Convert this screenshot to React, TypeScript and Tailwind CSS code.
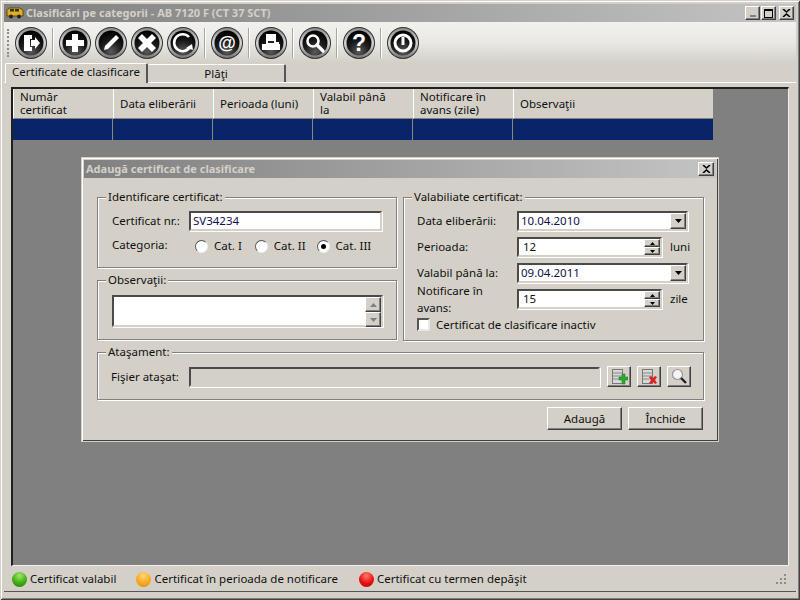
import type { ReactNode } from 'react'

const columns = ['Număr|certificat', 'Data eliberării', 'Perioada (luni)', 'Valabil până|la', 'Notificare în|avans (zile)', 'Observaţii']

// Round black toolbar button, the glyph goes on top of the ring
function RoundIcon({ children }: { children: ReactNode }) {
  return (
    <svg width="34" height="34" viewBox="0 0 34 34" className="shrink-0">
      <defs>
        <linearGradient id="ring" x1="0" y1="0" x2="0" y2="1">
          <stop offset="0" stopColor="#8a8a8a" />
          <stop offset="0.5" stopColor="#d8d8d8" />
          <stop offset="1" stopColor="#777777" />
        </linearGradient>
        <radialGradient id="ball" cx="0.5" cy="0.85" r="0.8">
          <stop offset="0" stopColor="#5a5a5a" />
          <stop offset="0.55" stopColor="#1a1a1a" />
          <stop offset="1" stopColor="#000000" />
        </radialGradient>
      </defs>
      <circle cx="17" cy="17" r="16" fill="#303030" />
      <circle cx="17" cy="17" r="15" fill="url(#ring)" />
      <circle cx="17" cy="17" r="12.5" fill="url(#ball)" />
      {children}
    </svg>
  )
}

function Separator() {
  return <div className="mx-[4px] h-[30px] w-[2px] shrink-0 border-l border-r border-l-[#a8a59e] border-r-white" />
}

function GroupBox({ title, className, children }: { title: string; className: string; children: ReactNode }) {
  return (
    <div className={`relative border border-[#808080] shadow-[1px_1px_0_#ffffff,inset_1px_1px_0_#ffffff] ${className}`}>
      <span className="absolute left-[8px] top-[-8px] bg-[#d4d0c8] px-[2px] leading-[14px]">{title}</span>
      {children}
    </div>
  )
}

function Sunken({ className, children }: { className: string; children?: ReactNode }) {
  return (
    <div className={`flex items-center border-2 border-t-[#4a4a4a] border-l-[#4a4a4a] border-r-[#d4d0c8] border-b-[#d4d0c8] shadow-[1px_1px_0_#ffffff] ${className}`}>
      {children}
    </div>
  )
}

function Raised({ className, children }: { className: string; children?: ReactNode }) {
  return (
    <div className={`flex items-center justify-center bg-[#d4d0c8] border border-t-white border-l-white border-r-[#404040] border-b-[#404040] shadow-[inset_-1px_-1px_0_#808080] ${className}`}>
      {children}
    </div>
  )
}

function ComboRow({ label, value }: { label: string; value: string }) {
  return (
    <div className="flex h-[20px] items-center">
      <span className="w-[100px] shrink-0">{label}</span>
      <Sunken className="h-[20px] w-[171px] justify-between bg-white pl-[2px] text-[#10104a]">
        <span>{value}</span>
        <Raised className="h-[16px] w-[16px]">
          <svg width="7" height="4" viewBox="0 0 7 4"><path d="M0 0h7L3.5 4z" fill="#000" /></svg>
        </Raised>
      </Sunken>
    </div>
  )
}

function SpinRow({ label, value, unit }: { label: string; value: string; unit: string }) {
  return (
    <div className="flex h-[20px] items-center">
      <span className="w-[100px] shrink-0">{label}</span>
      <Sunken className="h-[20px] w-[145px] justify-between bg-white pl-[4px]">
        <span>{value}</span>
        <div className="flex flex-col">
          <Raised className="h-[8px] w-[16px]">
            <svg width="5" height="3" viewBox="0 0 5 3"><path d="M0 3h5L2.5 0z" fill="#000" /></svg>
          </Raised>
          <Raised className="h-[8px] w-[16px]">
            <svg width="5" height="3" viewBox="0 0 5 3"><path d="M0 0h5L2.5 3z" fill="#000" /></svg>
          </Raised>
        </div>
      </Sunken>
      <span className="ml-[8px]">{unit}</span>
    </div>
  )
}

function Radio({ label, checked, className }: { label: string; checked?: boolean; className: string }) {
  return (
    <div className={`flex items-center ${className}`}>
      <div className="flex h-[13px] w-[13px] items-center justify-center rounded-full border border-t-[#555555] border-l-[#555555] border-r-[#eeeeee] border-b-[#eeeeee] bg-white">
        {checked && <div className="h-[5px] w-[5px] rounded-full bg-black" />}
      </div>
      <span className="ml-[6px]">{label}</span>
    </div>
  )
}

function DbStack() {
  return (
    <>
      <rect x="2.5" y="1.5" width="10" height="14" fill="#d8d8d8" stroke="#777" />
      <path d="M3 5h9M3 8h9M3 11h9" stroke="#888" />
    </>
  )
}

export default function App() {
  return (
    <div className="relative h-[600px] w-[800px] overflow-hidden bg-[#d4d0c8] p-[4px] font-['Liberation_Sans',sans-serif] text-[11.5px] text-[#101010] shadow-[inset_1px_1px_0_#d4d0c8,inset_-1px_-1px_0_#404040,inset_2px_2px_0_#ffffff,inset_-2px_-2px_0_#808080]">
      {/* ─── Caption ─── */}
      <div className="flex h-[18px] items-center bg-gradient-to-r from-[#808080] to-[#c4c4c4] pr-[2px]">
        <svg width="18" height="12" viewBox="0 0 18 12" className="ml-[2px] mr-[2px] shrink-0">
          <path d="M1 3.5 3 1h11l3 2.5V9H1z" fill="#e0b020" stroke="#4a3800" strokeWidth="0.8" />
          <rect x="4" y="2" width="4" height="2.5" fill="#30302a" />
          <rect x="9" y="2" width="4" height="2.5" fill="#30302a" />
          <circle cx="5" cy="9.5" r="2" fill="#222" />
          <circle cx="13" cy="9.5" r="2" fill="#222" />
        </svg>
        <span className="font-['DejaVu_Sans',sans-serif] text-[11px] font-bold text-[#d4d0c8]">Clasificări pe categorii - AB 7120 F (CT 37 SCT)</span>
        <div className="ml-auto flex items-center">
          <Raised className="h-[14px] w-[15px] items-end pb-[2px]"><div className="h-[2px] w-[6px] bg-[#808080]" /></Raised>
          <Raised className="ml-[1px] h-[14px] w-[15px]"><div className="h-[9px] w-[9px] border border-t-2 border-black" /></Raised>
          <Raised className="ml-[3px] h-[14px] w-[15px]">
            <svg width="9" height="8" viewBox="0 0 9 8"><path d="M1 0l3.5 3L8 0M1 8l3.5-3L8 8" stroke="#000" strokeWidth="1.6" fill="none" /></svg>
          </Raised>
        </div>
      </div>

      {/* ─── Toolbar ─── */}
      <div className="flex h-[41px] items-center bg-gradient-to-b from-[#f2f1ed] via-[#e9e8e3] to-[#d4d0c8] pl-[3px]">
        <div className="mr-[5px] h-[28px] w-[2px] border-l-2 border-dotted border-[#8c8c8c]" />
        <RoundIcon>
          <path d="M10 9h8v4h-2v8h2v4h-8z" fill="#fff" />
          <path d="M17 14h4v-3l5 6-5 6v-3h-4z" fill="#fff" />
        </RoundIcon>
        <Separator />
        <RoundIcon><path d="M14 8h6v6h6v6h-6v6h-6v-6H8v-6h6z" fill="#fff" /></RoundIcon>
        <div className="w-[2px] shrink-0" />
        <RoundIcon><path d="M10 24l1-4L22 9l3 3-11 11z" fill="#fff" /></RoundIcon>
        <div className="w-[2px] shrink-0" />
        <RoundIcon><path d="M12 8l5 5 5-5 4 4-5 5 5 5-4 4-5-5-5 5-4-4 5-5-5-5z" fill="#fff" /></RoundIcon>
        <div className="w-[2px] shrink-0" />
        <RoundIcon>
          <path d="M24 21a8.5 8.5 0 1 1-1-10" fill="none" stroke="#fff" strokeWidth="2.6" />
          <path d="M20 22l6-4 1 6z" fill="#fff" />
        </RoundIcon>
        <Separator />
        <RoundIcon>
          <text x="17" y="23" textAnchor="middle" fill="#fff" fontSize="18" fontWeight="700" fontFamily="Liberation Sans">@</text>
        </RoundIcon>
        <Separator />
        <RoundIcon>
          <path d="M12 8h10v8h3v2l1 0v6H8v-6h4z" fill="#fff" />
          <path d="M14 17h6v-2h-6z" fill="#222" />
        </RoundIcon>
        <Separator />
        <RoundIcon>
          <circle cx="15" cy="15" r="5.5" fill="none" stroke="#fff" strokeWidth="2.6" />
          <path d="M19 19l6 6" stroke="#fff" strokeWidth="3.4" strokeLinecap="round" />
        </RoundIcon>
        <Separator />
        <RoundIcon>
          <text x="17" y="25" textAnchor="middle" fill="#fff" fontSize="23" fontWeight="700" fontFamily="Liberation Sans">?</text>
        </RoundIcon>
        <Separator />
        <RoundIcon>
          <circle cx="17" cy="17" r="8" fill="none" stroke="#fff" strokeWidth="3" />
          <rect x="15.5" y="11" width="3" height="8" fill="#fff" />
        </RoundIcon>
      </div>

      {/* ─── Tabs ─── */}
      <div className="flex h-[20px] items-end border-b border-b-white pl-[1px]">
        <div className="z-10 mb-[-1px] flex h-[20px] w-[143px] items-center justify-center rounded-t-[2px] border-l border-r-2 border-t border-l-white border-r-[#555555] border-t-white bg-[#d4d0c8] pb-[3px]">
          Certificate de clasificare
        </div>
        <div className="flex h-[18px] w-[138px] items-center justify-center rounded-t-[2px] border-r-2 border-t border-r-[#555555] border-t-white bg-[#d4d0c8]">
          Plăţi
        </div>
      </div>

      {/* ─── Grid ─── */}
      <div className="ml-[7px] mr-[7px] mt-[4px] h-[479px] border-l-2 border-t-2 border-r border-b border-l-[#202020] border-t-[#202020] border-r-[#f0f0f0] border-b-[#f0f0f0] bg-[#808080]">
        <div className="flex h-[30px] w-[700px]">
          {columns.map((col) => (
            <div key={col} className="flex w-[100px] last:w-[200px] flex-col justify-center border-b border-l border-b-[#808080] border-l-white bg-[#d4d0c8] pl-[6px] pb-[1px] leading-[13px]">
              {col.split('|').map((line) => <span key={line}>{line}</span>)}
            </div>
          ))}
        </div>
        <div className="flex h-[21px] w-[700px] bg-[#0a246a]">
          {columns.map((col) => (
            <div key={col} className="w-[100px] last:w-[200px] border-r border-r-[#8a8a7a] last:border-r-0" />
          ))}
        </div>
      </div>

      {/* ─── Legend ─── */}
      <div className="flex h-[26px] items-center border-b border-b-[#555555] pl-[8px] pt-[1px]">
        <div className="h-[15px] w-[15px] rounded-full bg-[radial-gradient(circle_at_50%_25%,#9ee86a,#3fae12_55%,#1d7a08)]" />
        <span className="ml-[3px]">Certificat valabil</span>
        <div className="ml-[20px] h-[15px] w-[15px] rounded-full bg-[radial-gradient(circle_at_50%_25%,#ffd878,#f8a820_55%,#d98a08)]" />
        <span className="ml-[3px]">Certificat în perioada de notificare</span>
        <div className="ml-[21px] h-[15px] w-[15px] rounded-full bg-[radial-gradient(circle_at_50%_25%,#ff7a6a,#e81010_55%,#a80808)]" />
        <span className="ml-[3px]">Certificat cu termen depăşit</span>
        <svg width="12" height="12" viewBox="0 0 12 12" className="ml-auto mr-[9px]">
          <path d="M9 1h2v2H9zM5 5h2v2H5zM9 5h2v2H9zM1 9h2v2H1zM5 9h2v2H5zM9 9h2v2H9z" fill="#8c8c84" />
        </svg>
      </div>

      {/* ─── Dialog ─── */}
      <div className="absolute left-[82px] top-[158px] flex h-[283px] w-[636px] flex-col bg-[#d4d0c8] p-[2px] shadow-[inset_1px_1px_0_#ffffff,inset_-1px_-1px_0_#404040,0_0_0_1px_#d4d0c8]">
        <div className="flex h-[18px] shrink-0 items-center justify-between bg-gradient-to-r from-[#808080] to-[#c4c4c4] pl-[2px] pr-[2px]">
          <span className="font-['DejaVu_Sans',sans-serif] text-[11px] font-bold text-[#d4d0c8]">Adaugă certificat de clasificare</span>
          <Raised className="h-[14px] w-[16px]">
            <svg width="9" height="8" viewBox="0 0 9 8"><path d="M1 0l3.5 3L8 0M1 8l3.5-3L8 8" stroke="#000" strokeWidth="1.6" fill="none" /></svg>
          </Raised>
        </div>

        <div className="flex flex-1 flex-col pl-[13px] pr-[12px] pt-[19px]">
          <div className="flex gap-[6px]">
            <div className="flex w-[300px] flex-col gap-[12px]">
              <GroupBox title="Identificare certificat:" className="h-[71px] px-[14px] pt-[13px]">
                <div className="flex h-[20px] items-center">
                  <span className="w-[77px] shrink-0">Certificat nr.:</span>
                  <Sunken className="h-[20px] w-[194px] bg-white pl-[2px] text-[#10104a]">SV34234</Sunken>
                </div>
                <div className="mt-[6px] flex h-[18px] items-center">
                  <span className="w-[83px] shrink-0 pb-[2px]">Categoria:</span>
                  <Radio label="Cat. I" className="w-[64px]" />
                  <Radio label="Cat. II" className="w-[66px]" />
                  <Radio checked label="Cat. III" className="w-[70px]" />
                </div>
              </GroupBox>
              <GroupBox title="Observaţii:" className="h-[60px] px-[14px] pt-[14px]">
                <Sunken className="h-[32px] w-[271px] items-start justify-end bg-white">
                  <div className="flex flex-col">
                    <Raised className="h-[15px] w-[16px]">
                      <svg width="7" height="4" viewBox="0 0 7 4"><path d="M0 4h7L3.5 0z" fill="#808080" /></svg>
                    </Raised>
                    <Raised className="h-[15px] w-[16px]">
                      <svg width="7" height="4" viewBox="0 0 7 4"><path d="M0 0h7L3.5 4z" fill="#808080" /></svg>
                    </Raised>
                  </div>
                </Sunken>
              </GroupBox>
            </div>

            <GroupBox title="Valabiliate certificat:" className="flex h-[144px] w-[301px] flex-col gap-[6px] pl-[13px] pt-[13px]">
              <ComboRow label="Data eliberării:" value="10.04.2010" />
              <SpinRow label="Perioada:" value="12" unit="luni" />
              <ComboRow label="Valabil până la:" value="09.04.2011" />
              <SpinRow label="Notificare în avans:" value="15" unit="zile" />
              <div className="mt-[1px] flex items-center">
                <div className="h-[13px] w-[13px] border-2 border-t-[#555555] border-l-[#555555] border-r-[#e8e8e8] border-b-[#e8e8e8] bg-white" />
                <span className="ml-[6px]">Certificat de clasificare inactiv</span>
              </div>
            </GroupBox>
          </div>

          <GroupBox title="Ataşament:" className="mt-[11px] flex h-[48px] w-[607px] items-center pl-[13px] pt-[1px]">
            <span className="w-[78px] shrink-0">Fişier ataşat:</span>
            <Sunken className="h-[20px] w-[411px]" />
            <Raised className="ml-[7px] h-[21px] w-[24px]">
              <svg width="18" height="17" viewBox="0 0 18 17">
                <DbStack />
                <path d="M9 9h3V6h3v3h3v3h-3v4h-3v-4H9z" fill="#2ea82e" stroke="#1a7a1a" strokeWidth="0.5" />
              </svg>
            </Raised>
            <Raised className="ml-[6px] h-[21px] w-[24px]">
              <svg width="18" height="17" viewBox="0 0 18 17">
                <DbStack />
                <path d="M9 9l2-1 2 2 2-2 2 1-2 3 2 3-2 1-2-2-2 2-2-1 2-3z" fill="#e02020" />
              </svg>
            </Raised>
            <Raised className="ml-[6px] h-[21px] w-[24px]">
              <svg width="18" height="17" viewBox="0 0 18 17">
                <circle cx="7.5" cy="6.5" r="5" fill="#f4f4f4" stroke="#999" strokeWidth="1.2" />
                <path d="M11 10l5 5" stroke="#222" strokeWidth="2.4" />
              </svg>
            </Raised>
          </GroupBox>

          <div className="mt-[7px] flex justify-end gap-[6px] pr-[1px]">
            <Raised className="h-[23px] w-[75px]">Adaugă</Raised>
            <Raised className="h-[23px] w-[75px]">Închide</Raised>
          </div>
        </div>
      </div>
    </div>
  )
}
